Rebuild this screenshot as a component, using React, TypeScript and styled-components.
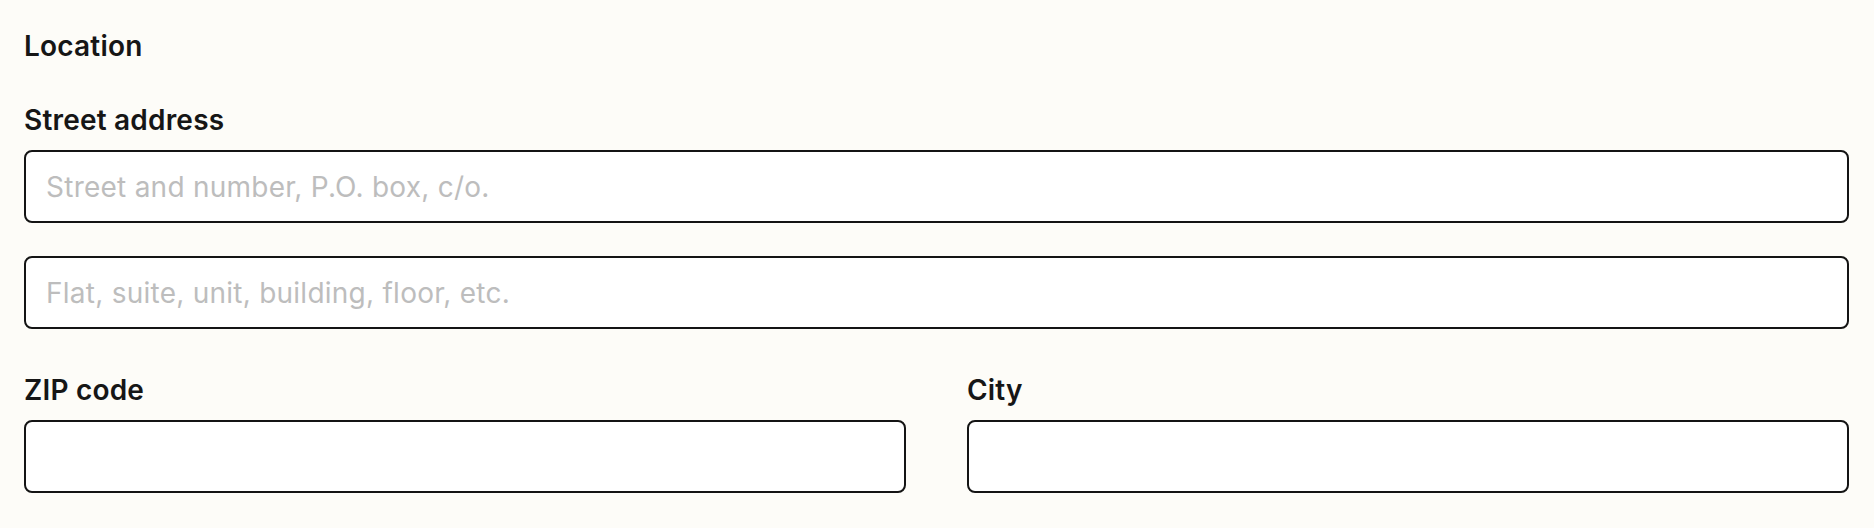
import React, { FC } from "react";
import styled, { createGlobalStyle } from "styled-components";

const GlobalStyle = createGlobalStyle`
  html, body {
    margin: 0;
    padding: 0;
    background: #fdfcf8;
  }
  body {
    font-family: Inter, "Noto Sans", sans-serif;
    color: #161616;
  }
`;

const Form = styled.form`
  padding: 30px 25px 0 24px;
  display: flex;
  flex-direction: column;
`;

const Heading = styled.h2`
  margin: 0 0 42px;
  font-size: 28px;
  line-height: 32px;
  font-weight: 600;
  letter-spacing: 0.2px;
`;

const Field = styled.div<{ $gap?: number }>`
  display: flex;
  flex-direction: column;
  margin-bottom: ${(p) => p.$gap ?? 0}px;
`;

const Label = styled.label`
  font-size: 28px;
  line-height: 32px;
  font-weight: 600;
  letter-spacing: 0.2px;
  margin-bottom: 14px;
`;

const Input = styled.input`
  box-sizing: border-box;
  width: 100%;
  height: 73px;
  border: 2px solid #141414;
  border-radius: 8px;
  background: #ffffff;
  padding: 0 20px;
  font-family: Inter, "Noto Sans", sans-serif;
  font-size: 28px;
  letter-spacing: 0.25px;
  color: #161616;
  outline: none;
  &::placeholder {
    color: #bdbdbd;
  }
`;

const Row = styled.div`
  display: grid;
  grid-template-columns: 1fr 1fr;
  column-gap: 61px;
`;

interface FieldProps {
  label?: string;
  placeholder?: string;
  gap?: number;
}

const TextField: FC<FieldProps> = ({ label, placeholder, gap }) => (
  <Field $gap={gap}>
    {label && <Label>{label}</Label>}
    <Input type="text" placeholder={placeholder} />
  </Field>
);

const App: FC = () => {
  return (
    <>
      <GlobalStyle />
      <Form onSubmit={(e) => e.preventDefault()}>
        <Heading>Location</Heading>
        <TextField
          label="Street address"
          placeholder="Street and number, P.O. box, c/o."
          gap={33}
        />
        <TextField placeholder="Flat, suite, unit, building, floor, etc." gap={45} />
        <Row>
          <TextField label="ZIP code" />
          <TextField label="City" />
        </Row>
      </Form>
    </>
  );
};

export default App;
